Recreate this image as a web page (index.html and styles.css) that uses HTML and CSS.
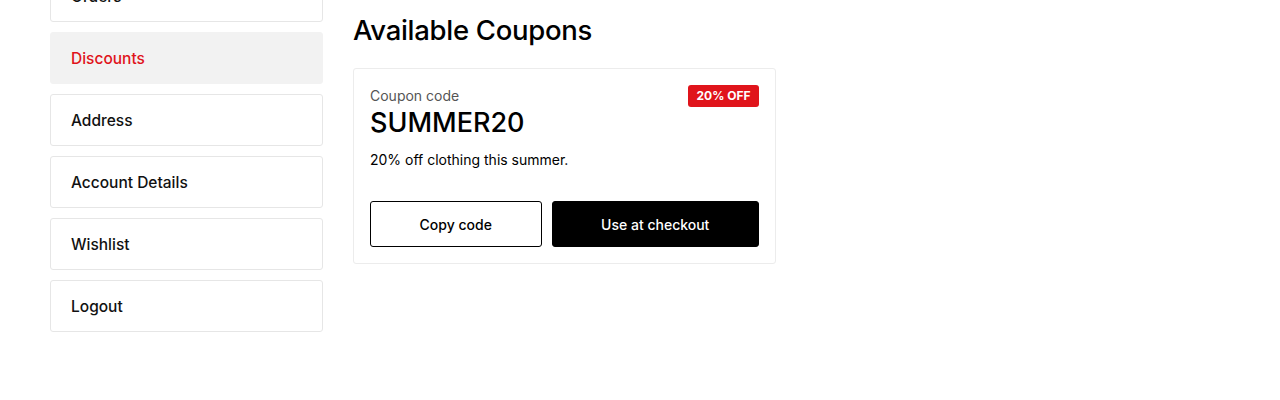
FILE: index.html
```html
<!DOCTYPE html>
<html>
<head>
<meta charset="utf-8">
<link rel="stylesheet" href="styles.css">
</head>
<body>
<div class="layout">
  <nav class="sidebar">
    <a class="nav-item">Orders</a>
    <a class="nav-item active">Discounts</a>
    <a class="nav-item">Address</a>
    <a class="nav-item">Account Details</a>
    <a class="nav-item">Wishlist</a>
    <a class="nav-item">Logout</a>
  </nav>
  <main class="content">
    <h1 class="title">Available Coupons</h1>
    <div class="coupon">
      <div class="coupon-head">
        <div>
          <div class="label">Coupon code</div>
          <div class="code">SUMMER20</div>
        </div>
        <span class="badge">20% OFF</span>
      </div>
      <p class="desc">20% off clothing this summer.</p>
      <div class="actions">
        <button class="btn btn-outline">Copy code</button>
        <button class="btn btn-dark">Use at checkout</button>
      </div>
    </div>
  </main>
</div>
</body>
</html>
```

FILE: styles.css
```css
* { box-sizing: border-box; }
html, body { margin: 0; padding: 0; background: #fff; }
body {
  font-family: Inter, "Noto Sans", "Liberation Sans", sans-serif;
  color: #000;
  overflow: hidden;
}
.layout {
  display: flex;
  gap: 30px;
  padding: 0 50px;
  margin-top: -30px;
  align-items: flex-start;
}
.sidebar {
  width: 273px;
  display: flex;
  flex-direction: column;
  gap: 10px;
  flex-shrink: 0;
}
.nav-item {
  display: flex;
  align-items: center;
  height: 52px;
  padding: 0 20px;
  border: 1px solid #e6e6e6;
  border-radius: 3px;
  font-size: 15.5px;
  font-weight: 500;
  color: #111;
}
.nav-item.active {
  background: #f2f2f2;
  border-color: #f2f2f2;
  color: #e0141b;
}
.content {
  padding-top: 42px;
}
.title {
  margin: 0 0 20px;
  font-size: 27.5px;
  font-weight: 500;
  line-height: 36px;
  letter-spacing: -0.3px;
}
.coupon {
  width: 423px;
  border: 1px solid #ececec;
  border-radius: 3px;
  padding: 16px;
}
.coupon-head {
  display: flex;
  justify-content: space-between;
  align-items: flex-start;
}
.label {
  font-size: 14px;
  color: #555;
  line-height: 20px;
  margin-top: 1px;
}
.code {
  font-size: 27px;
  font-weight: 500;
  line-height: 34px;
  letter-spacing: 0;
}
.badge {
  background: #e0141b;
  color: #fff;
  font-size: 12px;
  font-weight: 700;
  line-height: 22px;
  height: 22px;
  padding: 0 8.5px;
  border-radius: 3px;
}
.desc {
  margin: 10px 0 31px;
  font-size: 14px;
  line-height: 20px;
}
.actions {
  display: flex;
  gap: 10px;
}
.btn {
  flex: 1 1 auto;
  height: 46px;
  border-radius: 3px;
  font-family: inherit;
  font-size: 14px;
  font-weight: 500;
  cursor: pointer;
}
.btn-outline {
  background: #fff;
  color: #000;
  border: 1px solid #000;
}
.btn-dark {
  background: #000;
  color: #fff;
  border: 1px solid #000;
}
```
